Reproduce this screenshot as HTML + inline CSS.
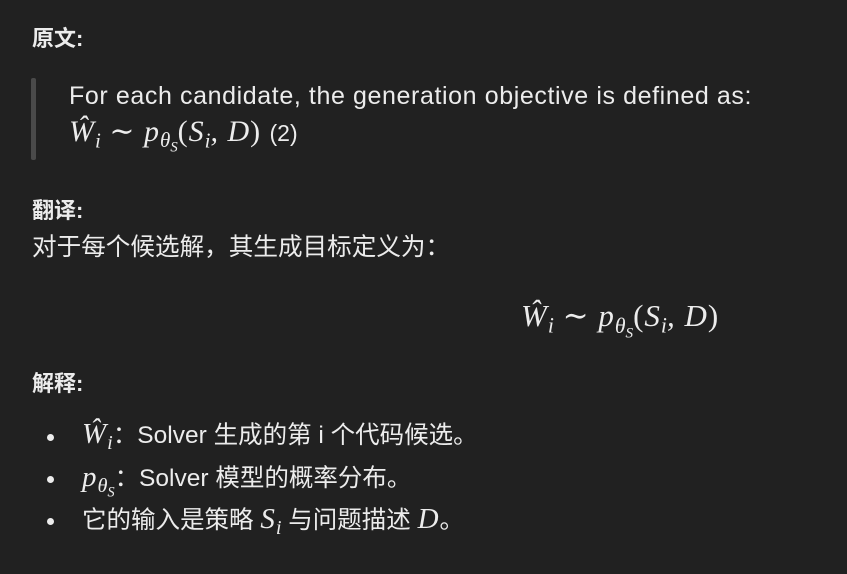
<!DOCTYPE html>
<html><head><meta charset="utf-8"><style>
body{margin:0;width:847px;height:574px;background:#212121;color:#ececec;font-family:"Liberation Sans","Noto Sans CJK SC",sans-serif;position:relative;overflow:hidden}
.a{position:absolute;white-space:nowrap;line-height:1}
.b{font-weight:bold;font-size:22px}
.m{font-family:"Liberation Serif","DejaVu Serif",serif;font-style:italic;letter-spacing:1px}
.u{font-style:normal}
sub{font-size:0.7em;vertical-align:-0.3em;letter-spacing:0}
.bar{position:absolute;left:31px;top:78px;width:5px;height:82px;background:#4a4a4a;border-radius:2px}
.dot{position:absolute;width:7px;height:7px;border-radius:50%;background:#ececec;left:47px}
</style></head><body>
<div class="a b" style="left:32px;top:28px">原文:</div>
<div class="bar"></div>
<div class="a" style="left:69px;top:84px;font-size:25px;letter-spacing:0.6px">For each candidate, the generation objective is defined as:</div>
<div class="a" style="left:69px;top:117px;font-size:30px"><span class="m">Ŵ<sub>i</sub> <span class="u">∼</span> p<sub>θ<sub>S</sub></sub><span class="u">(</span>S<sub>i</sub>, D<span class="u">)</span></span> <span style="font-size:23px">(2)</span></div>
<div class="a b" style="left:32px;top:200px">翻译:</div>
<div class="a" style="left:32px;top:236px;font-size:24.6px">对于每个候选解，其生成目标定义为：</div>
<div class="a" style="left:521px;top:300px;font-size:31px"><span class="m">Ŵ<sub>i</sub> <span class="u">∼</span> p<sub>θ<sub>S</sub></sub><span class="u">(</span>S<sub>i</sub>, D<span class="u">)</span></span></div>
<div class="a b" style="left:32px;top:373px">解释:</div>
<div class="dot" style="top:434px"></div>
<div class="a" style="left:82px;top:420px;font-size:24.5px"><span class="m" style="font-size:29px">Ŵ<sub>i</sub></span>：Solver 生成的第 i 个代码候选。</div>
<div class="dot" style="top:476px"></div>
<div class="a" style="left:82px;top:463px;font-size:24.5px"><span class="m" style="font-size:29px">p<sub>θ<sub>S</sub></sub></span>：Solver 模型的概率分布。</div>
<div class="dot" style="top:518px"></div>
<div class="a" style="left:82px;top:505px;font-size:24.5px">它的输入是策略 <span class="m" style="font-size:29px">S<sub>i</sub></span> 与问题描述 <span class="m" style="font-size:29px">D</span>。</div>
</body></html>
